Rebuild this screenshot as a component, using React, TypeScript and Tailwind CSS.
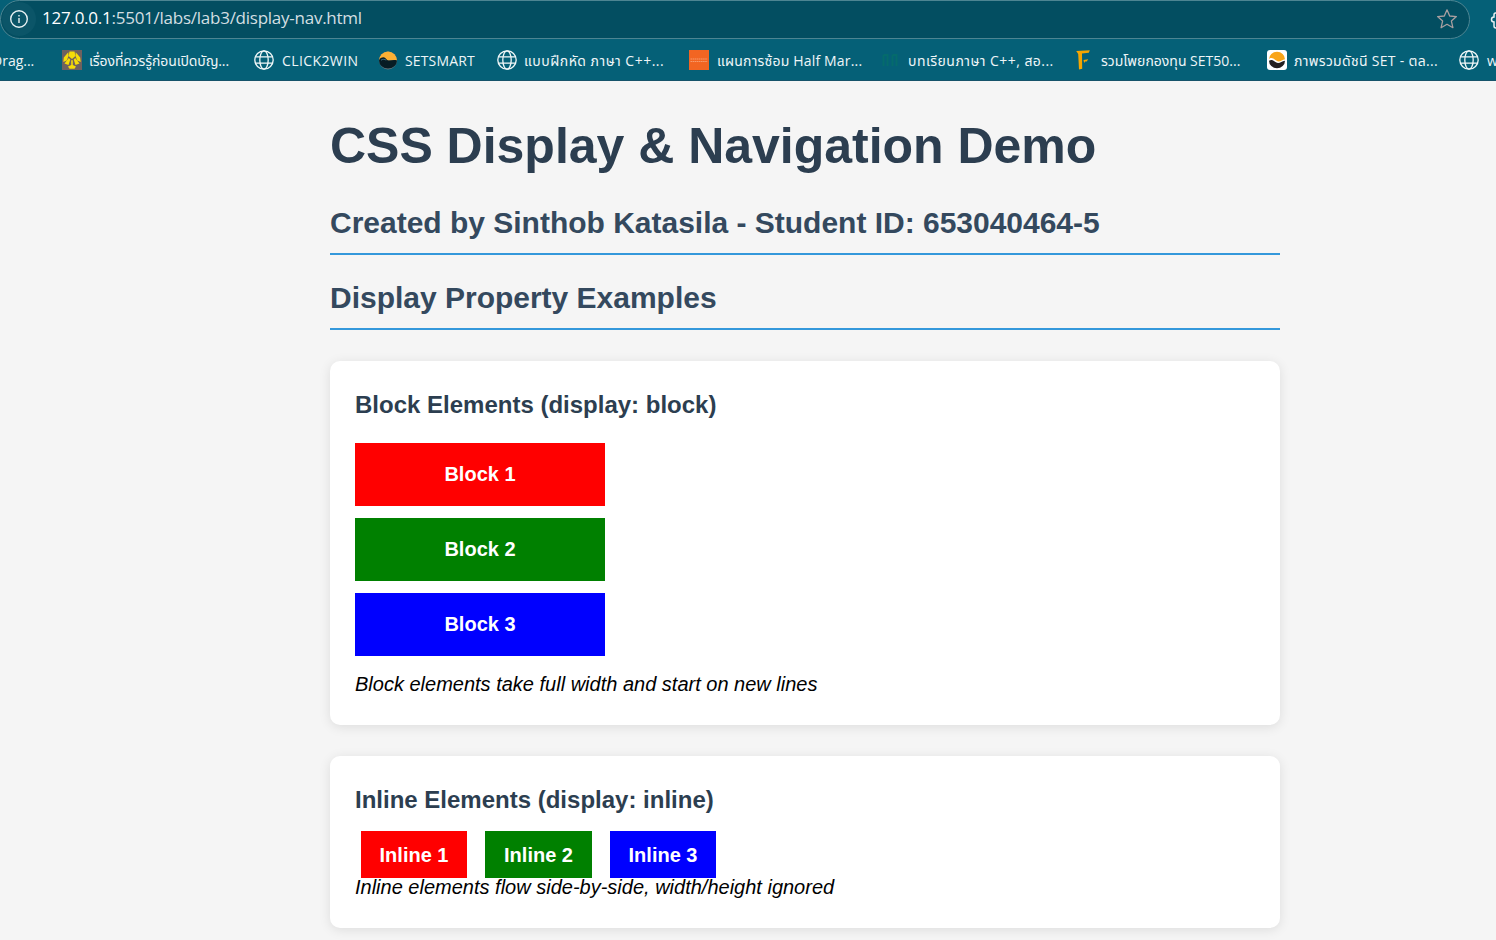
import React from "react";

const GlobeIcon = () => (
  <svg width="20" height="20" viewBox="0 0 20 20" fill="none" stroke="#f2f8f9" strokeWidth="1.3">
    <circle cx="10" cy="10" r="9.2" />
    <ellipse cx="10" cy="10" rx="4.2" ry="9.2" />
    <path d="M1.5 6.8h17M1.5 13.2h17" />
  </svg>
);

const GoldEmblem = () => (
  <svg width="20" height="20" viewBox="0 0 20 20">
    <rect width="20" height="20" fill="#6f615f" />
    <path d="M7.500 1.500h5l1 4.500-3.500 3-3.500-3Z" fill="#f6dc08" />
    <path d="M6.300 2.200 1.800 7.500 1.300 12l3.500-1.500L6.500 6ZM13.700 2.200l4.500 5.300.5 4.500-3.500-1.500L13.500 6Z" fill="#f6dc08" />
    <path d="M6.800 8 8.300 9.500 6.500 15 2.500 13.500ZM13.200 8l-1.500 1.500 1.800 5.500 4-1.500Z" fill="#f6dc08" />
    <path d="M9.200 10.200h1.600V15l3.200 1.500-1.500 2.200h-5L6 16.500 9.200 15Z" fill="#f6dc08" />
  </svg>
);

const WaveDisc = () => (
  <svg width="20" height="20" viewBox="0 0 20 20">
    <circle cx="10" cy="10.500" r="9" fill="#67767c" />
    <path d="M1 10.500a9 9 0 0 1 18 0Z" fill="#fbb034" />
    <path d="M1 10.500C1.500 8 3.500 7.300 5.500 7.300c2.500 0 2.500 3 5 3.200 2.500.2 5-1 8.500 0a9 8 0 0 1-18 0Z" fill="#071c24" />
    <path d="M3 10.200c1.500-1.200 4-1.200 5.200 0" stroke="#3c6f84" strokeWidth="1" fill="none" />
  </svg>
);

const OrangeTile = () => (
  <svg width="20" height="20" viewBox="0 0 20 20">
    <rect width="20" height="20" fill="#f26522" />
    <path d="M1.500 9h17M1.500 11.500h17" stroke="#f79a6b" strokeWidth="1.200" strokeDasharray="1.600 .5" />
  </svg>
);

const GreenMark = () => (
  <svg width="20" height="20" viewBox="0 0 20 20" fill="none" stroke="#056b6c" strokeWidth="2">
    <path d="M2.500 16V5M6.500 16V5h-4M11.500 16V5M15.500 16V5h-4" />
  </svg>
);

const GoldF = () => (
  <svg width="20" height="20" viewBox="0 0 20 20" fill="#f7a600">
    <path d="M.2.900 13.800.2l-1 2.600-6.800.8.200 15.200-3.200.700L2.200 4Z" />
    <path d="M7.500 10 12.200 9.300l-1.500 2.200-1.600.1-1 1.500Z" />
  </svg>
);

const WaveTile = () => (
  <svg width="20" height="20" viewBox="0 0 20 20">
    <rect width="20" height="20" rx="3" fill="#fff" />
    <path d="M2 9.200a8 7.500 0 0 1 16 0c-2.500.2-4 2.200-6.500 2.200S7 8 4.500 8C3.300 8 2.500 8.500 2 9.200Z" fill="#f9a51a" />
    <path d="M2 10.800c1-.8 2-1 3-.8 2.500.4 3.500 3 6 3s4-2 7-2.200a8 7.500 0 0 1-16 0Z" fill="#231f20" />
  </svg>
);

const Bookmark = ({ icon, label, className, text }: { icon?: React.ReactNode; label: string; className: string; text: string }) => (
  <div className={`flex h-[42px] shrink-0 items-center overflow-hidden ${className}`}>
    {icon && <span className="mr-[7px] shrink-0">{icon}</span>}
    <span className={`shrink-0 whitespace-nowrap ${text}`}>{label}</span>
  </div>
);

const Heading = ({ children, className }: { children: React.ReactNode; className: string }) => (
  <h2 className={`border-b-2 border-[#3498db] text-[30px] font-bold leading-[36px] tracking-[-0.01px] text-[#34495e] ${className}`}>
    {children}
  </h2>
);

export default function App() {
  return (
    <div className="h-[940px] w-[1496px] overflow-hidden bg-[#f5f5f5] font-['Liberation_Sans',Arial,sans-serif] text-black">
      <header className="h-[81px] border-b border-[#16536a] bg-[#056077] font-['Open_Sans','Noto_Sans_Thai','Noto_Sans',sans-serif] text-[#eef5f7]">
        <div className="flex h-[39px] items-center">
          <div className="flex h-[39px] w-[1470px] shrink-0 items-center rounded-full border border-[#4d8592] bg-[#034e61]">
            <div className="mb-[2px] ml-px flex h-[34px] w-[34px] items-center justify-center rounded-full bg-[#0b5568]">
              <svg width="20" height="20" viewBox="0 0 20 20" fill="none" stroke="#e8f1f3" strokeWidth="1.400">
                <circle cx="10" cy="10" r="8.300" />
                <path d="M10 9v5M10 6v1.500" />
              </svg>
            </div>
            <div className="mb-[3px] ml-[6px] grow whitespace-nowrap text-[17px] tracking-[-0.25px] text-[#d3dfe2]">
              <span className="text-white">127.0.0.1</span>:5501/labs/lab3/display-nav.html
            </div>
            <svg className="mb-px mr-3" width="20" height="20" viewBox="0 0 20 20" fill="none" stroke="#a99fa0" strokeWidth="1.300" strokeLinejoin="round">
              <path d="m10 .8 2.700 6.200 6.700.600-5 4.500 1.500 6.600-5.900-3.400-5.900 3.400 1.500-6.600-5-4.500 6.700-.600Z" />
            </svg>
          </div>
          <svg className="ml-5 shrink-0" width="20" height="20" viewBox="0 0 20 20" fill="none" stroke="#e8f1f3" strokeWidth="1.500">
            <path d="M8 3H5.500Q4 3 4 5v2Q1.500 7 1.500 9.500T4 12v4q0 2 2 2h10V3Z" />
          </svg>
        </div>
        <nav className="flex h-[42px] overflow-hidden text-[14px]">
          <Bookmark className="w-[62px]" text="-ml-[8px]" label="Drag..." />
          <Bookmark className="w-[192px]" icon={<GoldEmblem />} text="tracking-[-0.12px]" label="เรื่องที่ควรรู้ก่อนเปิดบัญ..." />
          <Bookmark className="w-[124px]" icon={<GlobeIcon />} text="ml-px tracking-[0.4px]" label="CLICK2WIN" />
          <Bookmark className="w-[119px]" icon={<WaveDisc />} text="tracking-[0.15px]" label="SETSMART" />
          <Bookmark className="w-[192px]" icon={<GlobeIcon />} text="tracking-[0.48px]" label="แบบฝึกหัด ภาษา C++..." />
          <Bookmark className="w-[192px]" icon={<OrangeTile />} text="ml-px tracking-[0.17px]" label="แผนการซ้อม Half Mar..." />
          <Bookmark className="w-[195px]" icon={<GreenMark />} text="tracking-[0.45px]" label="บทเรียนภาษา C++, สอ..." />
          <Bookmark className="w-[191px]" icon={<GoldF />} text="-ml-[2px]" label="รวมโพยกองทุน SET50..." />
          <Bookmark className="w-[192px]" icon={<WaveTile />} text="tracking-[0.3px]" label="ภาพรวมดัชนี SET - ตล..." />
          <Bookmark className="w-[37px]" icon={<GlobeIcon />} text="ml-px" label="w" />
        </nav>
      </header>

      <main className="ml-[330px] w-[950px]">
        <h1 className="pt-[36px] text-[50px] font-bold leading-[58px] tracking-[-0.02px] text-[#2c3e50]">CSS Display &amp; Navigation Demo</h1>
        <Heading className="mt-[30px] h-[50px]">Created by Sinthob Katasila - Student ID: 653040464-5</Heading>
        <Heading className="mt-[25px] h-[50px]">Display Property Examples</Heading>

        <section className="mt-[31px] h-[364px] rounded-[10px] bg-white px-[25px] pt-[30px] shadow-[0_2px_12px_rgba(0,0,0,0.1)]">
          <h3 className="text-[24px] font-bold leading-[28px] text-[#2c3e50]">Block Elements (display: block)</h3>
          <div className="mt-[24px] flex w-[250px] flex-col gap-3 text-center text-[20px] font-bold leading-[63px] text-white">
            <div className="h-[63px] bg-[#ff0000]">Block 1</div>
            <div className="h-[63px] bg-[#008000]">Block 2</div>
            <div className="h-[63px] bg-[#0000ff]">Block 3</div>
          </div>
          <p className="mt-[16px] text-[20px] italic leading-[24px]">Block elements take full width and start on new lines</p>
        </section>

        <section className="mt-[31px] h-[172px] rounded-[10px] bg-white px-[25px] pt-[30px] shadow-[0_2px_12px_rgba(0,0,0,0.1)]">
          <h3 className="text-[24px] font-bold leading-[28px] text-[#2c3e50]">Inline Elements (display: inline)</h3>
          <div className="ml-[6px] mt-[17px] flex gap-[18px] text-center text-[20px] font-bold leading-[49px] text-white">
            <span className="h-[47px] w-[106px] bg-[#ff0000]">Inline 1</span>
            <span className="h-[47px] w-[107px] bg-[#008000]">Inline 2</span>
            <span className="h-[47px] w-[106px] bg-[#0000ff]">Inline 3</span>
          </div>
          <p className="-mt-[3px] text-[20px] italic leading-[24px]">Inline elements flow side-by-side, width/height ignored</p>
        </section>
      </main>
    </div>
  );
}
